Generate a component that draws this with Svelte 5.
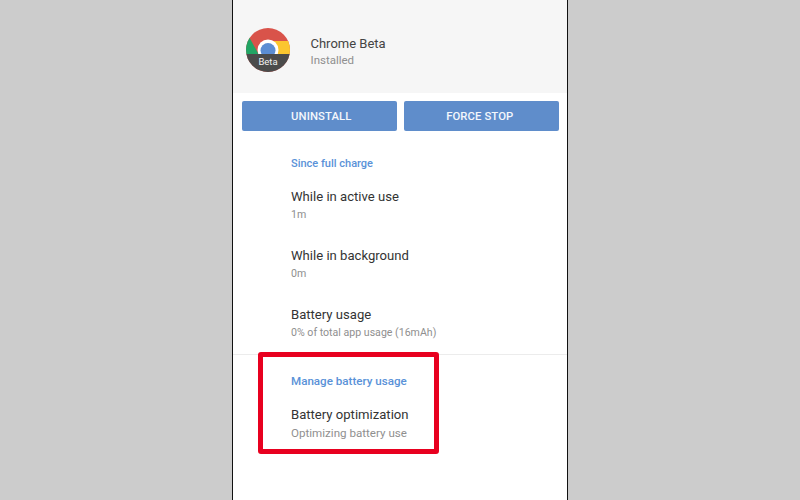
<script>
    const usage = [
        { title: 'While in active use', sub: '1m' },
        { title: 'While in background', sub: '0m' },
        { title: 'Battery usage', sub: '0% of total app usage (16mAh)' }
    ];
</script>

<div class="page">
    <div class="phone">
        <header class="app">
            <svg class="logo" width="44" height="44" viewBox="0 0 44 44">
                <defs>
                    <clipPath id="disc"><circle cx="22" cy="22" r="22" /></clipPath>
                </defs>
                <g clip-path="url(#disc)">
                    <rect width="44" height="44" fill="#d9534a" />
                    <path d="M2 7 L12.5 26 H0 V7 Z" fill="#22a565" />
                    <path d="M22 13 H44 V26 H28 Z" fill="#fbc62f" />
                    <circle cx="22" cy="22" r="10.5" fill="#fff" />
                    <circle cx="22" cy="22.5" r="7.5" fill="#5b8dd3" />
                    <rect y="26" width="44" height="18" fill="#4b4b4b" />
                </g>
                <text x="22" y="37" text-anchor="middle" class="beta">Beta</text>
            </svg>
            <div class="app-text">
                <div class="app-name">Chrome Beta</div>
                <div class="sub">Installed</div>
            </div>
        </header>

        <div class="actions">
            <button class="uninstall">UNINSTALL</button>
            <button class="stop">FORCE STOP</button>
        </div>

        <section class="group first">
            <h2>Since full charge</h2>
            {#each usage as row}
                <div class="row">
                    <div class="title">{row.title}</div>
                    <div class="sub">{row.sub}</div>
                </div>
            {/each}
        </section>

        <section class="group second">
            <h2>Manage battery usage</h2>
            <div class="row">
                <div class="title">Battery optimization</div>
                <div class="sub">Optimizing battery use</div>
            </div>
        </section>

        <div class="highlight"></div>
    </div>
</div>

<style>
    :global(body) {
        margin: 0;
    }
    .page {
        width: 800px;
        height: 500px;
        background: #cccccc;
        display: flex;
        justify-content: center;
        overflow: hidden;
        font-family: Roboto, "Liberation Sans", sans-serif;
    }
    .phone {
        position: relative;
        width: 334px;
        height: 500px;
        background: #fff;
        border-left: 1.5px solid #111;
        border-right: 1.5px solid #111;
    }
    .app {
        height: 93px;
        box-sizing: border-box;
        padding: 6px 0 0 12.5px;
        background: #f6f6f6;
        display: flex;
        align-items: center;
    }
    .logo {
        flex: none;
    }
    .beta {
        font-family: Roboto, "Liberation Sans", sans-serif;
        font-size: 9.5px;
        fill: #f2f2f2;
    }
    .app-text {
        margin-left: 21px;
        margin-top: 2px;
    }
    .app-name {
        font-size: 13px;
        line-height: 17px;
        color: #444;
    }
    .app-text .sub {
        margin-top: 1px;
        font-size: 11.5px;
    }
    .actions {
        display: flex;
        gap: 7px;
        padding: 8px 8.5px 0 8.5px;
    }
    .actions button {
        flex: 1;
        height: 30px;
        padding: 0;
        border: none;
        border-radius: 2px;
        background: #5f8dcb;
        color: #f4f7fc;
        font-family: inherit;
        font-size: 11.3px;
        font-weight: 500;
        letter-spacing: 0.1px;
    }
    .actions .uninstall {
        padding-left: 4px;
    }
    .actions .stop {
        padding-right: 3px;
    }
    .group {
        padding-left: 58px;
    }
    .first {
        padding-top: 26px;
        padding-bottom: 1px;
        border-bottom: 1px solid #ececec;
    }
    .first .sub {
        font-size: 10.6px;
    }
    .second {
        padding-top: 19px;
    }
    .second h2 {
        font-size: 11.6px;
    }
    .second .sub {
        font-size: 11.6px;
    }
    h2 {
        margin: 0;
        font-size: 11px;
        line-height: 14px;
        font-weight: 500;
        color: #5a92d8;
    }
    .row {
        height: 59px;
        box-sizing: border-box;
        padding-top: 12px;
    }
    .first h2 + .row {
        padding-top: 17px;
        height: 64px;
    }
    .second .row {
        padding-top: 17.5px;
    }
    .title {
        font-size: 13.1px;
        line-height: 17px;
        color: #333;
    }
    .sub {
        margin-top: 3px;
        font-size: 11px;
        line-height: 14px;
        color: #8f8f8f;
    }
    .highlight {
        position: absolute;
        left: 25px;
        top: 352px;
        width: 171px;
        height: 92px;
        border: 5px solid #e8001f;
        border-radius: 3px;
    }
</style>
